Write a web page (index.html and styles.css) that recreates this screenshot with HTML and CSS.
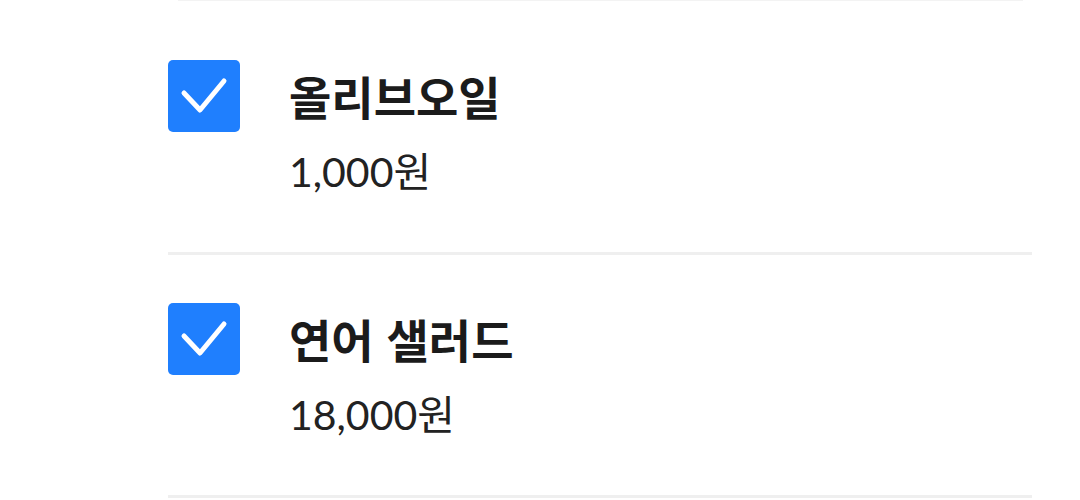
FILE: index.html
```html
<!DOCTYPE html>
<html lang="ko">
<head>
<meta charset="utf-8">
<title>장바구니</title>
<link rel="stylesheet" href="styles.css">
</head>
<body>
  <div class="list-edge"></div>
  <ul class="cart-list">
    <li class="cart-item">
      <span class="check is-checked" role="checkbox" aria-checked="true">
        <svg viewBox="0 0 72 72" width="72" height="72" aria-hidden="true">
          <polyline points="16,33 32,50 56,21" />
        </svg>
      </span>
      <div class="item-info">
        <p class="item-name">올리브오일</p>
        <p class="item-price">1,000원</p>
      </div>
    </li>
    <li class="cart-item">
      <span class="check is-checked" role="checkbox" aria-checked="true">
        <svg viewBox="0 0 72 72" width="72" height="72" aria-hidden="true">
          <polyline points="16,33 32,50 56,21" />
        </svg>
      </span>
      <div class="item-info">
        <p class="item-name">연어 샐러드</p>
        <p class="item-price">18,000원</p>
      </div>
    </li>
  </ul>
</body>
</html>
```

FILE: styles.css
```css
* {
  box-sizing: border-box;
}

html, body {
  margin: 0;
  padding: 0;
  background: #ffffff;
}

body {
  font-family: "Lato", "Noto Sans CJK KR", sans-serif;
  color: #222222;
}

/* faint edge left over from the list above */
.list-edge {
  height: 1px;
  margin: 0 57px 11px 178px;
  background: #f3f3f3;
}

.cart-list {
  list-style: none;
  margin: 0 48px 0 168px;
  padding: 0;
}

.cart-item {
  display: flex;
  align-items: flex-start;
  gap: 49px;
  padding: 48px 0 58px;
  border-bottom: 3px solid #efefef;
}

.check {
  flex: none;
  display: flex;
  width: 72px;
  height: 72px;
  border-radius: 5px;
  background: #1f7ffe;
}

.check polyline {
  fill: none;
  stroke: #ffffff;
  stroke-width: 5;
  stroke-linecap: round;
  stroke-linejoin: round;
}

.item-info {
  display: flex;
  flex-direction: column;
}

.item-name {
  margin: -1px 0 0;
  font-family: "Noto Sans CJK KR", sans-serif;
  font-weight: 700;
  font-size: 46px;
  line-height: 72px;
  color: #1b1b1b;
}

.item-price {
  margin: 19px 0 0;
  font-size: 41px;
  line-height: 44px;
  font-weight: 400;
  color: #222222;
}
```
